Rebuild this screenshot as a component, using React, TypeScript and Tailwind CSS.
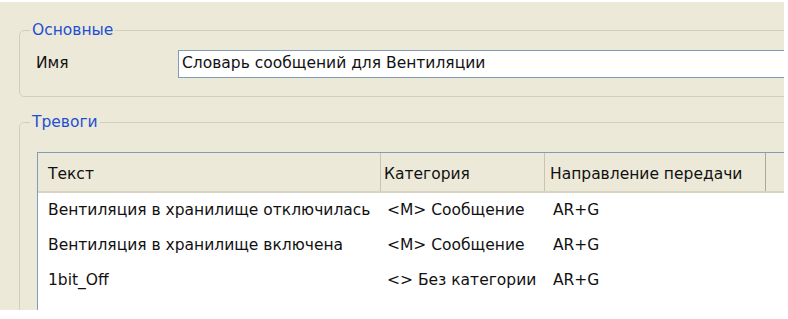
const rows = [
  { text: "Вентиляция в хранилище отключилась", cat: "<M> Сообщение", dir: "AR+G" },
  { text: "Вентиляция в хранилище включена", cat: "<M> Сообщение", dir: "AR+G" },
  { text: "1bit_Off", cat: "<> Без категории", dir: "AR+G" },
];

export default function App() {
  return (
    <div className="w-[788px] h-[319px] overflow-hidden bg-white font-['DejaVu_Sans',sans-serif] text-[15.5px] text-[#111]">
      <div className="mt-[2px] w-[784px] h-[308px] overflow-hidden bg-[#ECE9D8] pt-[18px]">
        {/* Основные */}
        <fieldset className="ml-[19px] mr-[-20px] border border-[#D0D0BF] rounded-[5px] p-0">
          <legend className="ml-[10px] px-[2px] h-[20px] leading-[20px] text-[#1E50D2]">Основные</legend>
          <div className="flex items-center pt-[10px] pb-[18px]">
            <span className="w-[142px] ml-[16px] shrink-0">Имя</span>
            <div className="flex-1 h-[28px] border border-[#7F9DB9] bg-white pl-[3px] flex items-center whitespace-nowrap">
              Словарь сообщений для Вентиляции
            </div>
          </div>
        </fieldset>

        {/* Тревоги */}
        <fieldset className="mt-[15px] ml-[19px] mr-[-20px] h-[300px] border border-[#D0D0BF] rounded-[5px] p-0">
          <legend className="ml-[10px] px-[2px] h-[20px] leading-[20px] text-[#1E50D2]">Тревоги</legend>
          <div className="pl-[17px] pt-[20px]">
            <div className="border-l border-t border-[#7F9DB9] bg-white h-[200px]">
              <div className="grid grid-cols-[343px_164px_221px_1fr] h-[40px] bg-[#ECE9D8] border-b-2 border-[#D6D3C2]">
                <div className="border-r border-[#C7C5B2] pl-[10px] pt-[5px] flex items-center">Текст</div>
                <div className="border-r border-[#C7C5B2] pl-[3px] pt-[5px] flex items-center">Категория</div>
                <div className="border-r border-[#ACA899] pl-[5px] pt-[5px] flex items-center whitespace-nowrap">Направление передачи</div>
                <div />
              </div>
              {rows.map((r, i) => (
                <div key={i} className="grid grid-cols-[343px_164px_221px_1fr] h-[35px] items-center whitespace-nowrap">
                  <div className="pl-[10px]">{r.text}</div>
                  <div className="pl-[6px]">{r.cat}</div>
                  <div className="pl-[8px]">{r.dir}</div>
                  <div />
                </div>
              ))}
            </div>
          </div>
        </fieldset>
      </div>
    </div>
  );
}
